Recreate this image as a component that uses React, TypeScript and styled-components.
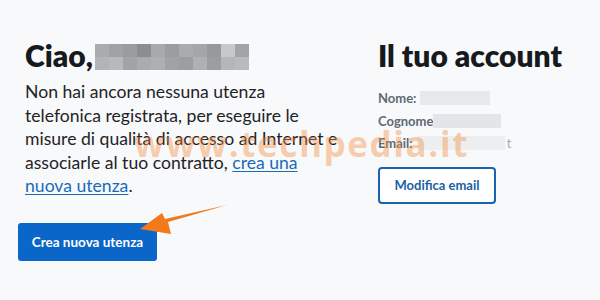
import React from "react";
import styled, { createGlobalStyle } from "styled-components";

const GlobalStyle = createGlobalStyle`
  html, body {
    margin: 0;
    padding: 0;
    background: #f7f9fb;
  }
  body {
    font-family: Lato, "Open Sans", sans-serif;
    color: #1c1c1c;
  }
`;

const Page = styled.div`
  position: relative;
  width: 600px;
  height: 300px;
  overflow: hidden;
  background: #f7f9fb;
  display: grid;
  grid-template-columns: 360px 1fr;
  padding-top: 38px;
  box-sizing: border-box;
`;

const LeftCol = styled.div`
  padding-left: 18px;
  display: flex;
  flex-direction: column;
`;

const RightCol = styled.div`
  padding-left: 18px;
  display: flex;
  flex-direction: column;
`;

const Heading = styled.h1<{ $pad?: number }>`
  margin: 0;
  padding-left: ${(p) => p.$pad ?? 0}px;
  font-size: 30px;
  font-weight: 800;
  line-height: 34px;
  color: #17191c;
  display: flex;
  align-items: center;
  gap: 2px;
`;

const Mosaic = styled.div`
  display: grid;
  grid-template-columns: repeat(11, 14px);
  grid-template-rows: 13px 13px;
  margin-top: 3px;
`;

const Cell = styled.span<{ $c: string }>`
  background: ${(p) => p.$c};
`;

const Paragraph = styled.p`
  margin: 8px 0 0;
  padding-left: 7px;
  font-size: 17.6px;
  line-height: 23.5px;
  color: #1f2326;
`;

const TextLink = styled.a`
  color: #1b6ab8;
  text-decoration: underline;
  text-underline-offset: 2px;
`;

const PrimaryButton = styled.button`
  margin-top: 25px;
  width: 139px;
  height: 38px;
  border: none;
  border-radius: 3px;
  background: #0a66c8;
  color: #fff;
  font-family: Lato, sans-serif;
  font-weight: 700;
  font-size: 13.5px;
  padding: 0;
`;

const Labels = styled.div`
  margin-top: 15px;
  display: flex;
  flex-direction: column;
`;

const InfoRow = styled.div`
  height: 22.5px;
  display: flex;
  align-items: center;
  font-size: 13px;
  font-weight: 700;
  color: #5f6a73;
`;

const Blur = styled.span<{ $w: number; $c: string; $ml: number }>`
  display: inline-block;
  width: ${(p) => p.$w}px;
  height: 14px;
  margin-left: ${(p) => p.$ml}px;
  background: ${(p) => p.$c};
`;

const FadedTail = styled.span`
  font-weight: 400;
  color: #a7adb3;
  margin-left: 2px;
`;

const OutlineButton = styled.button`
  margin-top: 12px;
  width: 118px;
  height: 37px;
  border: 2px solid #1b63ad;
  border-radius: 4px;
  background: #fff;
  color: #1b5fa6;
  font-family: Lato, sans-serif;
  font-weight: 700;
  font-size: 13px;
  padding: 0;
`;

const Watermark = styled.div`
  position: absolute;
  left: 134px;
  top: 120px;
  font-family: "Open Sans", sans-serif;
  font-size: 35px;
  font-weight: 700;
  letter-spacing: 1.6px;
  color: rgba(245, 140, 60, 0.42);
  pointer-events: none;
  white-space: nowrap;
`;

const Arrow = styled.svg`
  position: absolute;
  left: 0;
  top: 0;
  pointer-events: none;
`;

const topRow = ["#a9abac", "#a0a2a3", "#9a9d9e", "#8b8d8f", "#a7a9aa", "#9b9d9e", "#a9abac", "#a4a6a7", "#979a9b", "#c6c8c9", "#a2a5a7"];
const bottomRow = ["#b2b4b5", "#b7b9ba", "#a1a3a4", "#a9abac", "#adafb0", "#a0a2a3", "#9c9e9f", "#aeb0b1", "#9b9d9e", "#b4b6b7", "#b8babb"];

export default function App() {
  return (
    <>
      <GlobalStyle />
      <Page>
        <LeftCol>
          <Heading $pad={7}>
            Ciao,
            <Mosaic>
              {topRow.map((c, i) => (
                <Cell key={"t" + i} $c={c} />
              ))}
              {bottomRow.map((c, i) => (
                <Cell key={"b" + i} $c={c} />
              ))}
            </Mosaic>
          </Heading>
          <Paragraph>
            Non hai ancora nessuna utenza
            <br />
            telefonica registrata, per eseguire le
            <br />
            misure di qualità di accesso ad Internet e
            <br />
            associarle al tuo contratto, <TextLink href="#">crea una</TextLink>
            <br />
            <TextLink href="#">nuova utenza</TextLink>.
          </Paragraph>
          <PrimaryButton>Crea nuova utenza</PrimaryButton>
        </LeftCol>
        <RightCol>
          <Heading>Il tuo account</Heading>
          <Labels>
            <InfoRow>
              Nome:
              <Blur $w={70} $c="#e6e9ec" $ml={4} />
            </InfoRow>
            <InfoRow>
              Cognome
              <Blur $w={68} $c="#e3e6e9" $ml={0} />
            </InfoRow>
            <InfoRow>
              Email:
              <Blur $w={88} $c="#eceef0" $ml={4} />
              <FadedTail>t</FadedTail>
            </InfoRow>
          </Labels>
          <OutlineButton>Modifica email</OutlineButton>
        </RightCol>
        <Watermark>www.techpedia.it</Watermark>
        <Arrow width="600" height="300" viewBox="0 0 600 300">
          <path
            d="M227 205 L168 222 L171 234 L140 229 L162 213 L165 219 Z"
            fill="#f27a1a"
          />
        </Arrow>
      </Page>
    </>
  );
}
